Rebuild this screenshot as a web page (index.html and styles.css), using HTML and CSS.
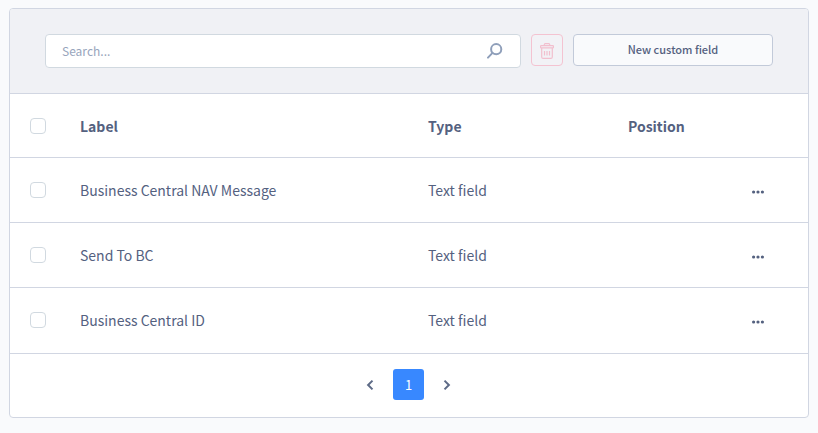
FILE: index.html
```html
<!DOCTYPE html>
<html lang="en">
<head>
<meta charset="utf-8">
<title>Custom fields</title>
<link rel="stylesheet" href="styles.css">
</head>
<body>
<main class="card">
  <div class="toolbar">
    <div class="search">
      <input class="search-input" type="text" placeholder="Search..." aria-label="Search">
      <svg class="search-icon" width="16" height="16" viewBox="0 0 16 16" aria-hidden="true">
        <circle cx="9.2" cy="6.2" r="5.1"/>
        <path d="M5.5 9.9 1 14.6"/>
      </svg>
    </div>
    <button class="btn btn-danger" type="button" aria-label="Delete" disabled>
      <svg class="trash-icon" width="14" height="16" viewBox="0 0 14 16" aria-hidden="true">
        <path d="M1.2 2.6h11.6q.6 0 .6.6v1.2q0 .5-.6.5H1.2q-.6 0-.6-.5V3.2q0-.6.6-.6zM4.3 2.4v-.9q0-.9.9-.9h3.600q.9 0 .9.9v.9M1.7 5v8.900q0 1.500 1.500 1.500h7.600q1.500 0 1.500-1.500V5M4.500 8v4.500M7 8v4.500M9.500 8v4.500"/>
      </svg>
    </button>
    <button class="btn btn-new" type="button">New custom field</button>
  </div>
  <table class="grid">
    <colgroup>
      <col class="col-check"><col><col class="col-type"><col class="col-position"><col class="col-actions">
    </colgroup>
    <thead>
      <tr>
        <th><input class="check" type="checkbox" aria-label="Select all"></th>
        <th scope="col">Label</th>
        <th scope="col">Type</th>
        <th scope="col">Position</th>
        <th></th>
      </tr>
    </thead>
    <tbody>
      <tr>
        <td><input class="check" type="checkbox" aria-label="Select Business Central NAV Message"></td>
        <td>Business Central NAV Message</td>
        <td>Text field</td>
        <td></td>
        <td class="actions"><button class="more" type="button" aria-label="Actions"><svg width="12" height="4" viewBox="0 0 12 4"><circle cx="1.6" cy="2" r="1.6"/><circle cx="6" cy="2" r="1.6"/><circle cx="10.4" cy="2" r="1.6"/></svg></button></td>
      </tr>
      <tr>
        <td><input class="check" type="checkbox" aria-label="Select Send To BC"></td>
        <td>Send To BC</td>
        <td>Text field</td>
        <td></td>
        <td class="actions"><button class="more" type="button" aria-label="Actions"><svg width="12" height="4" viewBox="0 0 12 4"><circle cx="1.6" cy="2" r="1.6"/><circle cx="6" cy="2" r="1.6"/><circle cx="10.4" cy="2" r="1.6"/></svg></button></td>
      </tr>
      <tr>
        <td><input class="check" type="checkbox" aria-label="Select Business Central ID"></td>
        <td>Business Central ID</td>
        <td>Text field</td>
        <td></td>
        <td class="actions"><button class="more" type="button" aria-label="Actions"><svg width="12" height="4" viewBox="0 0 12 4"><circle cx="1.6" cy="2" r="1.6"/><circle cx="6" cy="2" r="1.6"/><circle cx="10.4" cy="2" r="1.6"/></svg></button></td>
      </tr>
    </tbody>
  </table>
  <nav class="pagination" aria-label="Pagination">
    <button class="page-arrow" type="button" aria-label="Previous page"><svg width="8" height="12" viewBox="0 0 8 12"><path d="M6.5 1.6 2.1 6l4.4 4.4"/></svg></button>
    <button class="page-current" type="button" aria-current="page">1</button>
    <button class="page-arrow" type="button" aria-label="Next page"><svg width="8" height="12" viewBox="0 0 8 12"><path d="M1.5 1.6 5.9 6l-4.4 4.4"/></svg></button>
  </nav>
</main>
</body>
</html>
```
FILE: styles.css
```css
* {
  box-sizing: border-box;
}

body {
  margin: 0;
  padding: 8px 9px;
  background: #f9fafc;
  color: #54617f;
  font-family: "Source Sans Pro", "Noto Sans CJK SC", sans-serif;
  font-size: 14px;
  line-height: 20px;
}

button,
input {
  font-family: inherit;
  color: inherit;
}

.card {
  border: 1px solid #d1d6e2;
  border-radius: 4px;
  background: #fff;
  overflow: hidden;
}

.toolbar {
  display: flex;
  align-items: flex-start;
  gap: 10px;
  padding: 25px 35px;
  border-bottom: 1px solid #d1d6e2;
  background: #f0f1f5;
}

.search {
  display: flex;
  align-items: center;
  flex: 1;
  height: 34px;
  padding: 0 17px 0 16px;
  border: 1px solid #d1d9e0;
  border-radius: 4px;
  background: #fff;
}

.search-input {
  flex: 1;
  min-width: 0;
  padding: 0;
  border: 0;
  outline: 0;
  background: none;
  font-size: 12px;
  line-height: 20px;
}

.search-input::placeholder {
  color: #98a5bc;
  opacity: 1;
}

.search-icon {
  fill: none;
  stroke: #8f9fba;
  stroke-width: 2;
  stroke-linecap: round;
}

.btn {
  display: flex;
  align-items: center;
  justify-content: center;
  height: 32px;
  padding: 0;
  border: 1px solid #c2cad9;
  border-radius: 4px;
  background: #f9fafc;
  font-size: 11px;
  line-height: 16px;
  font-weight: 500;
}

.btn-danger {
  width: 32px;
  padding-top: 2px;
  border-color: #f4c3d1;
  background: #f2f2f6;
}

.trash-icon {
  fill: none;
  stroke: #f2bfce;
  stroke-width: 1.2;
}

.btn-new {
  width: 200px;
  padding-bottom: 2px;
}

.grid {
  width: 100%;
  border-collapse: separate;
  border-spacing: 0;
  table-layout: fixed;
}

.col-check {
  width: 50px;
}

.col-type {
  width: 200px;
}

.col-position,
.col-actions {
  width: 100px;
}

.grid th,
.grid td {
  height: 65px;
  padding: 0 0 0 20px;
  border-bottom: 1px solid #d1d6e2;
  text-align: left;
  vertical-align: middle;
}

.grid th {
  height: 64px;
}

.grid tbody tr:last-child td {
  height: 66px;
  padding-bottom: 1px;
}

.grid .actions {
  padding: 0;
  text-align: center;
}

.check {
  appearance: none;
  display: block;
  width: 16px;
  height: 16px;
  margin: 0;
  border: 1px solid #d1d9e0;
  border-radius: 4px;
  background: #fff;
}

.more,
.page-arrow {
  padding: 4px;
  border: 0;
  background: none;
}

.more {
  display: block;
  margin: 4px auto 0;
}

.more svg {
  display: block;
  fill: #54617f;
}

.pagination {
  display: flex;
  align-items: center;
  justify-content: center;
  gap: 15px;
  padding: 15px 17px 17px 16px;
}

.page-arrow svg {
  display: block;
  fill: none;
  stroke: #5d6a86;
  stroke-width: 2;
}

.page-current {
  width: 31px;
  height: 31px;
  padding: 0;
  border: 0;
  border-radius: 3px;
  background: #3888ff;
  color: #fff;
  font-size: 13px;
}
```
